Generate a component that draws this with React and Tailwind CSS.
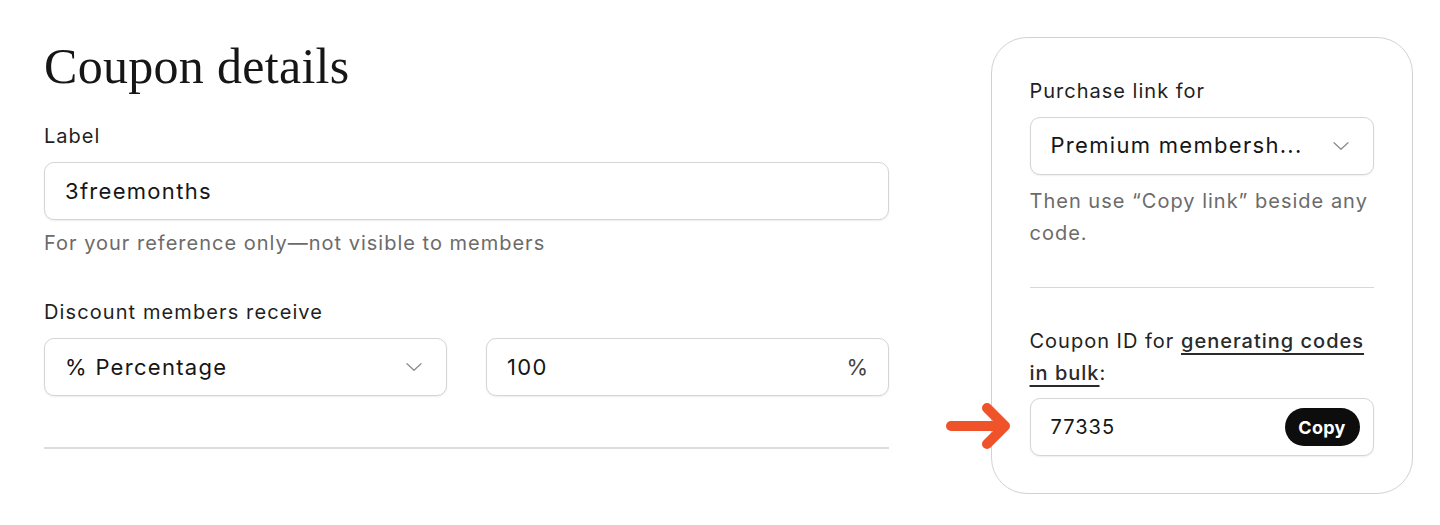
import { useState } from "react";

const Chevron = () => (
  <svg width="16" height="8" viewBox="0 0 16 8" fill="none" className="shrink-0">
    <path d="M1 0.75 L8 7.25 L15 0.75" stroke="#8a8a8a" strokeWidth="1.2" strokeLinecap="round" strokeLinejoin="round" />
  </svg>
);

const Arrow = () => (
  <svg width="68" height="50" viewBox="0 0 68 50" fill="none">
    <path d="M6 25 H58" stroke="#f0532a" strokeWidth="10" strokeLinecap="round" />
    <path d="M42 7 L60 25 L42 43" stroke="#f0532a" strokeWidth="10" strokeLinecap="round" strokeLinejoin="round" />
  </svg>
);

const boxClass =
  "h-[58px] flex items-center rounded-[10px] border border-[#d5d5d5] bg-white shadow-[0_1px_2px_rgba(0,0,0,0.07)]";

const App = () => {
  const [label] = useState("3freemonths");

  return (
    <div className="min-h-[525px] bg-white font-['Inter','Liberation_Sans',sans-serif] text-[#1f1f1f]">
      <div className="flex items-start gap-[102px] pl-[44px] pt-[36px]">
        {/* left column */}
        <div className="w-[845px] flex flex-col">
          <h1 className="font-['Liberation_Serif',serif] text-[50px] leading-[60px] font-normal text-[#161616] tracking-[0.3px]">
            Coupon details
          </h1>

          <div className="mt-[24px] text-[20px] leading-[32px] tracking-[1px]">Label</div>
          <div className={`${boxClass} mt-[10px] px-[20px]`}>
            <span className="text-[22px] tracking-[1.3px] text-[#161616]">{label}</span>
          </div>
          <div className="mt-[7px] text-[20px] leading-[32px] tracking-[1px] text-[#6b6b6b]">
            For your reference only—not visible to members
          </div>

          <div className="mt-[37px] text-[20px] leading-[32px] tracking-[1.1px]">Discount members receive</div>
          <div className="mt-[10px] grid grid-cols-2 gap-[39px]">
            <div className={`${boxClass} justify-between pl-[20px] pr-[24px]`}>
              <span className="text-[22px] tracking-[1.3px] text-[#161616]">% Percentage</span>
              <Chevron />
            </div>
            <div className={`${boxClass} justify-between pl-[20px] pr-[20px]`}>
              <span className="text-[22px] tracking-[1.3px] text-[#161616]">100</span>
              <span className="text-[22px] text-[#444]">%</span>
            </div>
          </div>

          <div className="mt-[51px] h-[2px] bg-[#dcdcdc]" />
        </div>

        {/* right card */}
        <div className="mt-[1px] w-[422px] rounded-[36px] border-[1.5px] border-[#d2d2d2] bg-white pl-[37.5px] pr-[38.5px] pt-[36.5px] pb-[37px]">
          <div className="text-[20px] leading-[32px] tracking-[1px]">Purchase link for</div>
          <div className={`${boxClass} mt-[10px] justify-between pl-[20px] pr-[24px]`}>
            <span className="text-[22px] tracking-[1.3px] text-[#161616]">Premium membersh...</span>
            <Chevron />
          </div>
          <div className="mt-[10px] text-[20px] leading-[32px] tracking-[1px] text-[#6b6b6b]">
            Then use “Copy link” beside any code.
          </div>

          <div className="mt-[38px] h-[1.5px] bg-[#d8d8d8]" />

          <div className="mt-[37px] text-[20px] leading-[32px] tracking-[1px] text-[#222]">
            Coupon ID for{" "}
            <a href="#" className="underline decoration-[1.5px] underline-offset-[5px] font-medium text-[#2a2a2a]">
              generating codes in bulk
            </a>
            :
          </div>
          <div className="relative mt-[9px]">
            <div className="absolute left-[-85px] top-[3px]">
              <Arrow />
            </div>
            <div className={`${boxClass} h-[57px] justify-between pl-[20px] pr-[13px]`}>
              <span className="text-[20px] tracking-[1px] text-[#161616]">77335</span>
              <button className="h-[38px] w-[75px] rounded-full bg-[#0d0d0d] text-[18px] font-bold tracking-[0.3px] text-white">
                Copy
              </button>
            </div>
          </div>
        </div>
      </div>
    </div>
  );
};

export default App;
